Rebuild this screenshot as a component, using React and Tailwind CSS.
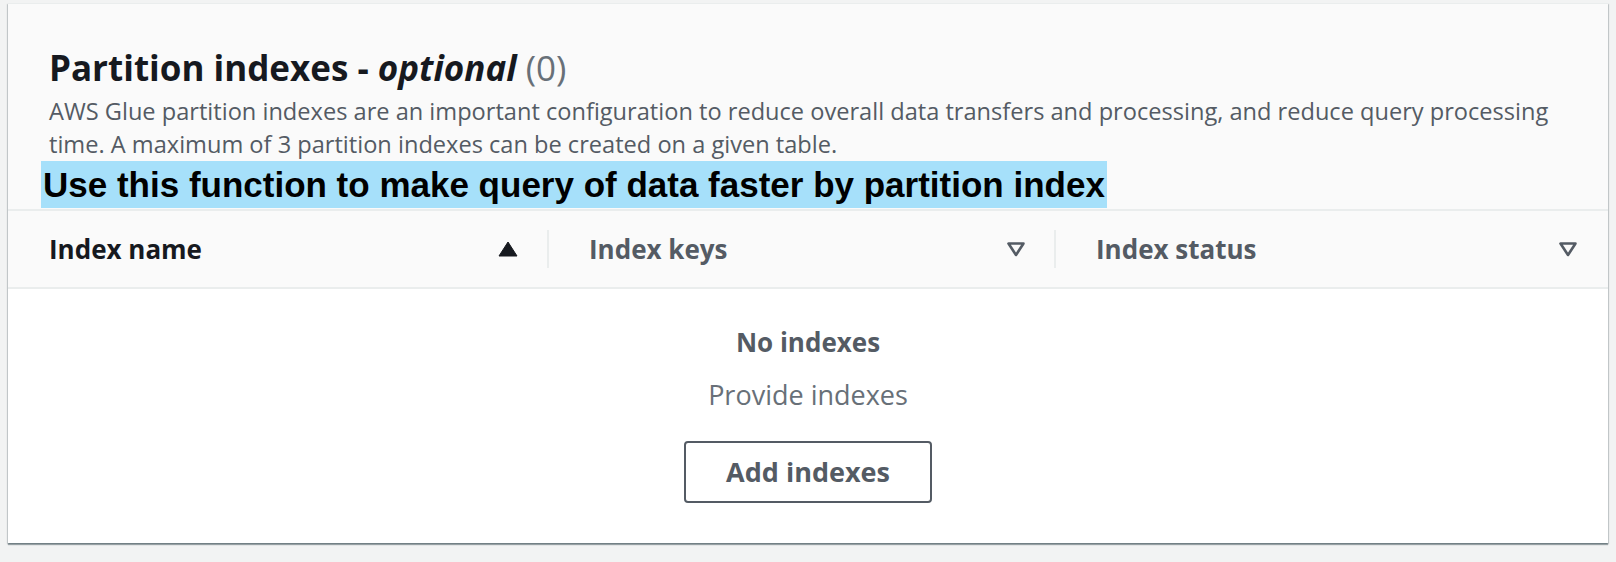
import React from 'react';

const SortUp = () => (
  <svg width="20" height="20" viewBox="0 0 20 20" className="shrink-0">
    <path d="M10 3 L19 17 L1 17 Z" fill="#16191f" stroke="#16191f" strokeWidth="1" strokeLinejoin="round" />
  </svg>
);

const SortDown = () => (
  <svg width="20" height="20" viewBox="0 0 20 20" className="shrink-0">
    <path d="M2.5 4.5 L17.5 4.5 L10 16 Z" fill="none" stroke="#545b64" strokeWidth="2.6" strokeLinejoin="round" />
  </svg>
);

const Separador = () => <div className="w-[2px] h-[38px] bg-[#eaeded] shrink-0" />;

const App = () => {
  return (
    <div className="min-h-screen bg-[#f2f3f3] pt-[3px] px-[8px] font-['Open_Sans',sans-serif]">
      <div className="bg-white border-t border-[#eaeded] shadow-[0_2px_1px_0_rgba(0,28,36,0.35),1px_1px_1px_0_rgba(0,28,36,0.15),-1px_1px_1px_0_rgba(0,28,36,0.15)]">
        {/* Encabezado */}
        <div className="bg-[#fafafa] pl-[41px] pr-[41px] pt-[44px] pb-[1px] border-b-2 border-[#eaeded]">
          <h2 className="text-[35px] leading-[40px] font-bold text-[#16191f]">
            Partition indexes - <i>optional</i> <span className="font-normal text-[#687078]">(0)</span>
          </h2>
          <p className="mt-[7px] text-[23.6px] leading-[33px] text-[#545b64]">
            AWS Glue partition indexes are an important configuration to reduce overall data transfers and processing, and reduce query processing time. A maximum of 3 partition indexes can be created on a given table.
          </p>
          <div className="-ml-[8px] w-fit bg-[#a6e0fa] h-[47px] px-[2px] font-['Liberation_Sans',Arial,sans-serif] font-bold text-[35px] leading-[47px] text-black">
            Use this function to make query of data faster by partition index
          </div>
        </div>

        {/* Cabecera de tabla */}
        <div className="grid grid-cols-[541px_507px_1fr] h-[78px] bg-[#fafafa] border-b-2 border-[#eaeded] text-[26px] font-bold">
          <div className="flex items-center pl-[41px]">
            <span className="flex-1 text-[#16191f]">Index name</span>
            <SortUp />
            <div className="w-[29px]" />
            <Separador />
          </div>
          <div className="flex items-center pl-[40px]">
            <span className="flex-1 text-[#545b64]">Index keys</span>
            <SortDown />
            <div className="w-[28px]" />
            <Separador />
          </div>
          <div className="flex items-center pl-[40px] pr-[30px]">
            <span className="flex-1 text-[#545b64]">Index status</span>
            <SortDown />
          </div>
        </div>

        {/* Estado vacío */}
        <div className="flex flex-col items-center pt-[38px] pb-[40px] bg-white">
          <p className="text-[26px] leading-[30px] font-bold text-[#545b64]">No indexes</p>
          <p className="mt-[23px] text-[27px] leading-[30px] text-[#687078]">Provide indexes</p>
          <button className="mt-[31px] w-[248px] h-[62px] border-2 border-[#545b64] rounded-[4px] text-[27px] font-bold text-[#545b64] bg-white">
            Add indexes
          </button>
        </div>
      </div>
    </div>
  );
};

export default App;
